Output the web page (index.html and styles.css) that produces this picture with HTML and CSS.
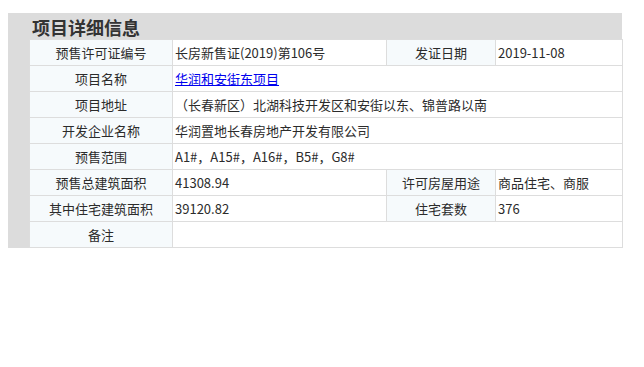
FILE: index.html
```html
<!DOCTYPE html>
<html lang="zh-CN">
<head>
<meta charset="utf-8">
<title>项目详细信息</title>
<link rel="stylesheet" href="styles.css">
</head>
<body>
<div class="panel">
  <h2 class="title">项目详细信息</h2>
  <table class="info">
    <colgroup>
      <col class="c1"><col class="c2"><col class="c3"><col class="c4">
    </colgroup>
    <tr>
      <td class="lbl">预售许可证编号</td>
      <td class="val">长房新售证(2019)第106号</td>
      <td class="lbl">发证日期</td>
      <td class="val">2019-11-08</td>
    </tr>
    <tr>
      <td class="lbl">项目名称</td>
      <td class="val" colspan="3"><a class="link" href="#">华润和安街东项目</a></td>
    </tr>
    <tr>
      <td class="lbl">项目地址</td>
      <td class="val" colspan="3">（长春新区）北湖科技开发区和安街以东、锦普路以南</td>
    </tr>
    <tr>
      <td class="lbl">开发企业名称</td>
      <td class="val" colspan="3">华润置地长春房地产开发有限公司</td>
    </tr>
    <tr>
      <td class="lbl">预售范围</td>
      <td class="val" colspan="3">A1#，A15#，A16#，B5#，G8#</td>
    </tr>
    <tr>
      <td class="lbl">预售总建筑面积</td>
      <td class="val">41308.94</td>
      <td class="lbl">许可房屋用途</td>
      <td class="val">商品住宅、商服</td>
    </tr>
    <tr>
      <td class="lbl">其中住宅建筑面积</td>
      <td class="val">39120.82</td>
      <td class="lbl">住宅套数</td>
      <td class="val">376</td>
    </tr>
    <tr>
      <td class="lbl">备注</td>
      <td class="val" colspan="3"></td>
    </tr>
  </table>
</div>
</body>
</html>
```

FILE: styles.css
```css
html, body {
  margin: 0;
  padding: 0;
  background: #ffffff;
}
body {
  font-family: "Noto Sans CJK SC", "Noto Sans", sans-serif;
  font-size: 13px;
  color: #2b2b2b;
}
.panel {
  width: 593px;
  margin: 13px 0 0 8px;
  padding-left: 21px;
  background: #dcdcdc;
}
.title {
  margin: 0;
  height: 26px;
  line-height: 28px;
  padding-left: 3px;
  font-size: 18px;
  font-weight: bold;
  color: #333333;
}
.info {
  width: 593px;
  border-collapse: collapse;
  table-layout: fixed;
  background: #ffffff;
}
.c1 { width: 143px; }
.c2 { width: 214px; }
.c3 { width: 109px; }
.c4 { width: 127px; }
.info td {
  height: 25px;
  padding: 0 2px;
  border: 1px solid #dddddd;
  white-space: nowrap;
  vertical-align: middle;
  line-height: 25px;
}
.lbl {
  text-align: center;
  background: #f6fafc;
}
.val {
  text-align: left;
  background: #ffffff;
}
.link {
  color: #0000ee;
  text-decoration: underline;
}
```
